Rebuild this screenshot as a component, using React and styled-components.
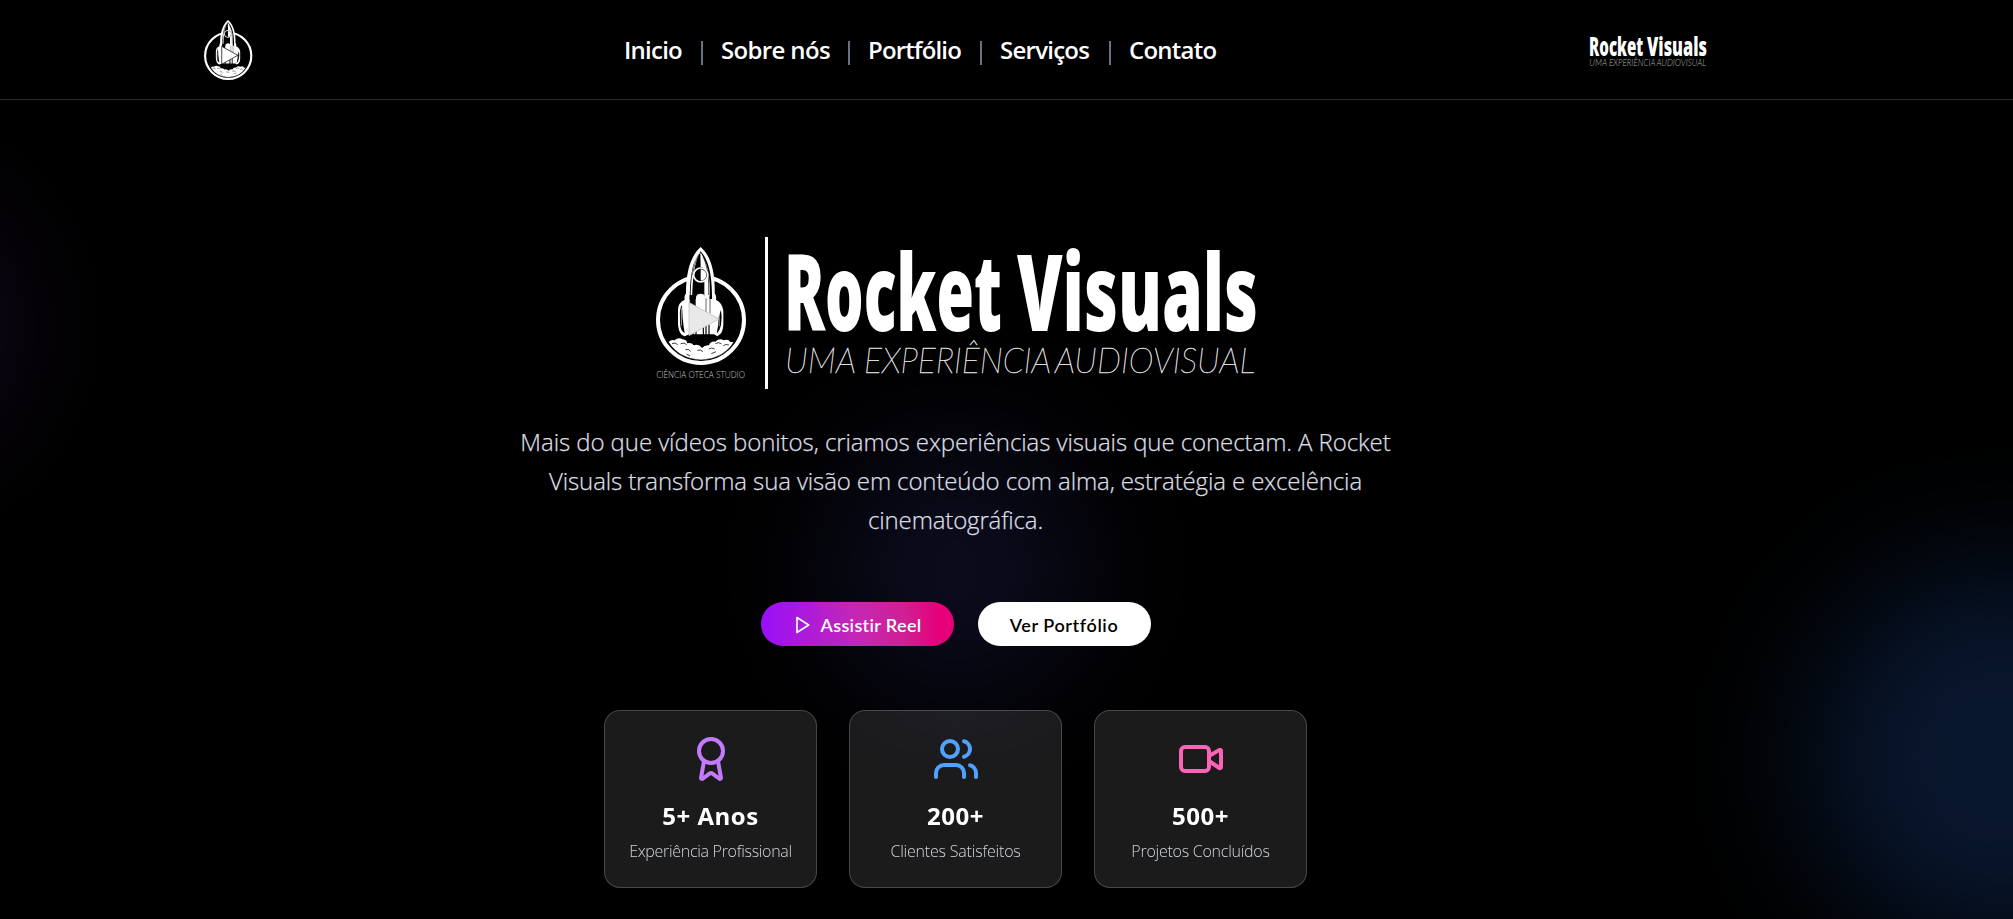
import React from "react";
import styled, { createGlobalStyle } from "styled-components";
import { Award, Users, Video } from "lucide-react";

const sans = `"Open Sans", "Noto Sans", "Liberation Sans", sans-serif`;

const GlobalStyle = createGlobalStyle`
  *, *::before, *::after { box-sizing: border-box; }
  html, body { margin: 0; background: #000; }
  body { font-family: ${sans}; color: #fff; overflow: hidden; }
`;

const Page = styled.div`
  position: relative;
  width: 100%;
  height: 919px;
  overflow: hidden;
  background: #000;
  display: flex;
  flex-direction: column;
`;

const Glow = styled.div`
  position: absolute;
  left: ${(p) => p.$x}px;
  top: ${(p) => p.$y}px;
  width: ${(p) => p.$size}px;
  height: ${(p) => p.$size}px;
  border-radius: 50%;
  background: ${(p) => p.$color};
  filter: blur(64px);
`;

const Header = styled.header`
  position: relative;
  flex: none;
  height: 100px;
  padding: 0 306px 0 204px;
  border-bottom: 1px solid #2d2d2d;
  background: #000;
  display: grid;
  grid-template-columns: 420px 1fr 117px;
  align-items: center;
`;

const HeaderBrand = styled.div`
  display: flex;
  padding-top: 3px;
`;

const Nav = styled.nav`
  display: flex;
  align-items: center;
`;

const NavLink = styled.a`
  width: ${(p) => p.$w}px;
  padding-top: 1px;
  white-space: nowrap;
  font-size: 24px;
  line-height: 32px;
  font-weight: 600;
  letter-spacing: ${(p) => p.$ls}px;
  color: #fff;
  text-decoration: none;
`;

const Divider = styled.span`
  width: 2px;
  height: 24px;
  margin: 6px 18.5px 0;
  background: #6a7282;
`;

const Hero = styled.main`
  position: relative;
  flex: 1;
  padding: 136px 102px 0 0;
  display: flex;
  flex-direction: column;
  align-items: center;
`;

const Brand = styled.div`
  display: flex;
  height: 154px;
  margin-left: 3px;
`;

const BrandBar = styled.div`
  width: 3px;
  height: 152px;
  margin: 1px 20px 0 19px;
  background: #fff;
`;

const Lead = styled.p`
  margin: 32px 0 0;
  display: flex;
  flex-direction: column;
  align-items: center;
  font-size: 24px;
  line-height: 39px;
  font-weight: 300;
  color: #dcdfe5;
  -webkit-text-stroke: 0.25px #dcdfe5;
`;

const LeadLine = styled.span`
  white-space: nowrap;
  letter-spacing: ${(p) => p.$ls}px;
`;

const Actions = styled.div`
  margin-top: 63px;
  display: flex;
  gap: 24px;
`;

const Button = styled.button`
  width: ${(p) => p.$w}px;
  height: 44px;
  padding: 1px 0 0;
  border: 0;
  border-radius: 22px;
  display: flex;
  align-items: center;
  justify-content: center;
  gap: 8px;
  white-space: nowrap;
  font-family: Lato, ${sans};
  font-size: 18px;
  font-weight: 600;
  font-variant-ligatures: none;
  letter-spacing: ${(p) => p.$ls}px;
  color: ${(p) => (p.$primary ? "#fff" : "#000")};
  background: ${(p) =>
    p.$primary
      ? "linear-gradient(90deg, #9810fa 0%, #c527b4 50%, #d01f92 75%, #e6007a 92%)"
      : "#fff"};
`;

const Stats = styled.section`
  margin-top: 64px;
  display: grid;
  grid-template-columns: repeat(3, 213px);
  gap: 32px;
`;

const Card = styled.article`
  height: 178px;
  padding: 24px 0;
  border: 1px solid rgba(255, 255, 255, 0.2);
  border-radius: 16px;
  background: rgba(255, 255, 255, 0.105);
  backdrop-filter: blur(8px);
  display: flex;
  flex-direction: column;
  align-items: center;
  svg { flex: none; color: ${(p) => p.$accent}; }
`;

const Figure = styled.div`
  margin-top: 17px;
  font-size: 24px;
  line-height: 32px;
  font-weight: 700;
  white-space: nowrap;
  letter-spacing: 0.5px;
`;

const Caption = styled.div`
  margin-top: 7px;
  font-size: 16px;
  line-height: 24px;
  font-weight: 300;
  white-space: nowrap;
  color: #d1d5dc;
  letter-spacing: ${(p) => p.$ls}px;
`;

function RocketMark({ width, height, viewBox, compact }) {
  return (
    <svg width={width} height={height} viewBox={viewBox} fill="none" overflow="visible">
      <circle cx="183" cy="285" r="129" stroke="#fff" strokeWidth="12" />
      <path
        d="M86 351 q8 -9 18 -5 q10 -10 24 -3 q14 2 13 12 q14 -3 20 6 q16 -5 25 8 q8 -10 21 -8 q4 -13 19 -11 q12 -12 25 -4 q14 -6 20 5 l10 1 Q250 402 183 405 Q118 402 86 351Z"
        fill="#fff"
      />
      <path d="M78 343 Q113 403 183 405 Q253 403 288 343" stroke="#111" strokeWidth="1.6" />
      <path
        d="M96 356 q10 -5 17 3 M122 356 q11 -5 18 3 M136 374 q10 -4 16 5 M172 376 q11 -4 17 4 M206 372 q9 -6 18 0 M226 356 q9 -6 18 0 M250 362 q8 -6 17 -2 M140 388 l10 4 M214 386 l14 -6"
        stroke="#111"
        strokeWidth="2.4"
      />
      <g transform={compact ? "translate(0 23) scale(1 .93)" : undefined}>
        <path
          d="M182 66 C152 92 138 140 138 205 Q132 214 134 224 Q114 232 114 256 V300 Q118 332 134 334 L148 328 H222 L232 334 Q250 326 250 298 V258 Q248 234 228 224 Q230 212 224 205 C226 140 212 92 182 66Z"
          fill="#fff"
        />
        <path d="M182 79 C160 104 150 142 149 222 H216 C216 142 204 104 182 79Z" fill="#000" />
        <path d="M181 82 C201 110 212 150 209 215 L208 260 H193 V168 Q206 160 202 142 Q196 130 182 126Z" fill="#fff" />
        <path d="M178 82 C163 106 155 142 154 220" stroke="#fff" strokeWidth="5" />
        <path d="M176 88 C166 108 160 130 158 150" stroke="#000" strokeWidth="2" />
        <path d="M190 96 C204 130 207 160 206 210" stroke="#000" strokeWidth="2" />
        <circle cx="182" cy="150" r="21" fill="#000" stroke="#fff" strokeWidth="5" />
        <path d="M182 133 a17 17 0 0 1 0 34Z" fill="#fff" />
        <path d="M149 210 h18 v40 h-18z" fill="#000" />
        <path d="M168 268 V216 Q170 206 182 206 Q194 206 195 216 V268Z" fill="#fff" />
        <path d="M126 240 Q118 250 120 276 V296 Q122 318 134 324 Q130 300 128 280Z" fill="#000" />
        <path d="M124 248 V302" stroke="#fff" strokeWidth="2" />
        <path d="M243 254 Q247 276 243 300 Q240 316 230 326 Q236 300 236 276Z" fill="#000" />
        <path d="M238 262 V304" stroke="#fff" strokeWidth="1.6" />
        <path d="M198 220 V262 M210 214 V264" stroke="#000" strokeWidth="1.8" />
      </g>
      <path
        d="M159 310 V345 M168 306 V347 M190 302 V346 M198 300 V338 M207 300 V342"
        stroke="#000"
        strokeWidth="3.5"
      />
      <path
        d="M147 232 L237 282 L147 332Z"
        fill={compact ? "#fff" : "#e9e9e9"}
        stroke={compact ? "#000" : "#b5b5b5"}
        strokeWidth={compact ? 4 : 2}
        strokeLinejoin="round"
      />
      {!compact && (
        <text
          x="49"
          y="458"
          fontFamily={sans}
          fontWeight="300"
          fontSize="28"
          textLength="266"
          lengthAdjust="spacingAndGlyphs"
          fill="#c4c4c4"
        >
          CIÊNCIA OTECA STUDIO
        </text>
      )}
    </svg>
  );
}

const titleWords = [
  { text: "Rocket", x: -4, w: 218 },
  { text: "Visuals", x: 229, w: 241 },
];

const taglineWords = [
  { text: "UMA", x: -3, w: 71 },
  { text: "EXPERIÊNCIA", x: 76, w: 187 },
  { text: "AUDIOVISUAL", x: 267, w: 200 },
];

function Wordmark({ width, height, small }) {
  const tone = small ? "#b4b4b4" : "#dcdcdc";
  return (
    <svg width={width} height={height} viewBox="0 0 470 154" overflow="visible">
      {titleWords.map((word) => (
        <text
          key={word.text}
          x={word.x}
          y="94.7"
          fontFamily={sans}
          fontWeight="800"
          fontSize="107"
          textLength={word.w}
          lengthAdjust="spacingAndGlyphs"
          fill="#fff"
        >
          {word.text}
        </text>
      ))}
      {taglineWords.map((word) => (
        <text
          key={word.text}
          x={word.x}
          y="137.3"
          fontFamily={`Lato, ${sans}`}
          fontStyle="italic"
          fontWeight={small ? 300 : 100}
          fontSize="35.6"
          textLength={word.w}
          lengthAdjust="spacingAndGlyphs"
          fill={tone}
          stroke={tone}
          strokeWidth={small ? 0 : 0.55}
        >
          {word.text}
        </text>
      ))}
    </svg>
  );
}

function PlayIcon() {
  return (
    <svg
      width="20"
      height="20"
      viewBox="0 0 24 24"
      fill="none"
      stroke="currentColor"
      strokeWidth="2"
      strokeLinejoin="round"
    >
      <polygon points="6 3 20 12 6 21 6 3" />
    </svg>
  );
}

const links = [
  { label: "Inicio", w: 58, ls: -0.75 },
  { label: "Sobre nós", w: 108, ls: -0.65 },
  { label: "Portfólio", w: 93, ls: -0.85 },
  { label: "Serviços", w: 90, ls: -0.75 },
  { label: "Contato", w: 87, ls: -0.75 },
];

const lead = [
  { text: "Mais do que vídeos bonitos, criamos experiências visuais que conectam. A Rocket", ls: -0.08 },
  { text: "Visuals transforma sua visão em conteúdo com alma, estratégia e excelência", ls: -0.12 },
  { text: "cinematográfica.", ls: -0.14 },
];

const stats = [
  { Icon: Award, accent: "#c27aff", value: "5+ Anos", label: "Experiência Profissional", ls: -0.3 },
  { Icon: Users, accent: "#51a2ff", value: "200+", label: "Clientes Satisfeitos", ls: -0.2 },
  { Icon: Video, accent: "#fb64b6", value: "500+", label: "Projetos Concluídos", ls: -0.25 },
];

export default function App() {
  return (
    <Page>
      <GlobalStyle />
      <Glow $x={-250} $y={198} $size={256} $color="rgba(173,70,255,.12)" />
      <Glow $x={1810} $y={566} $size={384} $color="rgba(43,127,255,.175)" />
      <Glow $x={828} $y={442} $size={256} $color="rgba(97,95,255,.12)" />

      <Header>
        <RocketMark width={48.4} height={60} viewBox="48 85 270 335" compact />
        <Nav>
          {links.map((link, i) => (
            <React.Fragment key={link.label}>
              {i > 0 && <Divider />}
              <NavLink href="#" $w={link.w} $ls={link.ls}>
                {link.label}
              </NavLink>
            </React.Fragment>
          ))}
        </Nav>
        <HeaderBrand>
          <Wordmark width={117} height={38.3} small />
        </HeaderBrand>
      </Header>

      <Hero>
        <Brand>
          <RocketMark width={90} height={154} viewBox="48 33 270 462" />
          <BrandBar />
          <Wordmark width={470} height={154} />
        </Brand>
        <Lead>
          {lead.map((line) => (
            <LeadLine key={line.text} $ls={line.ls}>
              {line.text}
            </LeadLine>
          ))}
        </Lead>
        <Actions>
          <Button $w={193} $ls={0.35} $primary>
            <PlayIcon />
            Assistir Reel
          </Button>
          <Button $w={173} $ls={0.6}>
            Ver Portfólio
          </Button>
        </Actions>
        <Stats>
          {stats.map(({ Icon, accent, value, label, ls }) => (
            <Card key={label} $accent={accent}>
              <Icon size={48} strokeWidth={2} />
              <Figure>{value}</Figure>
              <Caption $ls={ls}>{label}</Caption>
            </Card>
          ))}
        </Stats>
      </Hero>
    </Page>
  );
}
